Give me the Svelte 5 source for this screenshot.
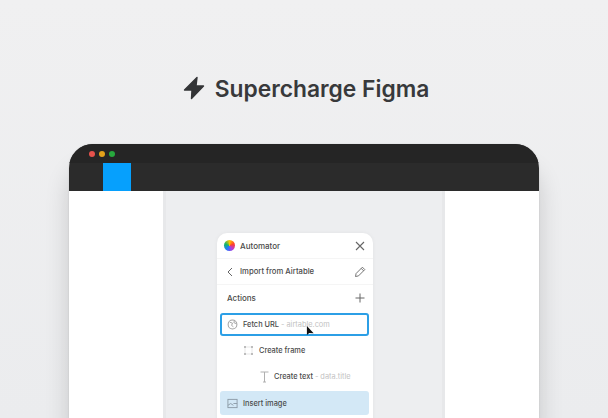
<script>
  const gradient = "conic-gradient(#ffc400, #ff3d2e, #b03be0, #1f7dff, #12b76a, #ffc400)";
</script>

<div class="page">
  <header class="hero">
    <svg class="bolt" viewBox="0 0 22 24" width="22" height="24" aria-hidden="true">
      <path d="M14 1.5 1.5 14H9l-.5 8.5L20.5 10H13z" fill="#333436" stroke="#333436" stroke-width="1.4" stroke-linejoin="round"/>
    </svg>
    <h1>Supercharge Figma</h1>
  </header>

  <section class="window">
    <div class="chrome">
      <div class="lights"><i class="red"></i><i class="yellow"></i><i class="green"></i></div>
      <div class="tabbar"><div class="tab"></div></div>
    </div>
    <div class="workspace">
      <div class="rail"></div>
      <div class="canvas">
        <div class="plugin">
          <div class="row title">
            <span class="logo" style:background={gradient}></span>
            <span class="name">Automator</span>
            <svg class="icon end" viewBox="0 0 10 10" width="10" height="10"><path d="M1 1l8 8M9 1L1 9" stroke="#666" stroke-width="1.1" fill="none"/></svg>
          </div>
          <div class="row sub">
            <svg class="icon" viewBox="0 0 6 10" width="6" height="10"><path d="M5 1 1 5l4 4" stroke="#666" stroke-width="1" fill="none"/></svg>
            <span class="name">Import from Airtable</span>
            <svg class="icon end" viewBox="0 0 12 12" width="12" height="12"><path d="M1.5 10.5l.6-3L8.4 1.2l2.4 2.4L4.5 9.9zM7.2 2.4l2.4 2.4" stroke="#666" stroke-width="0.9" fill="none"/></svg>
          </div>
          <div class="row actions">
            <span class="name">Actions</span>
            <svg class="icon end" viewBox="0 0 10 10" width="10" height="10"><path d="M5 0.5v9M0.5 5h9" stroke="#666" stroke-width="1" fill="none"/></svg>
          </div>
          <div class="list">
            <div class="item selected">
              <svg viewBox="0 0 12 12" width="11" height="11"><circle cx="6" cy="6" r="4.8" fill="none" stroke="#a0a0a0" stroke-width="1.1"/><path d="M3 3.5l3 1-1 2.5 2 1.5M8 2l-.5 2 2.5 1" stroke="#a0a0a0" fill="none"/></svg>
              <span>Fetch URL <em>- airtable.com</em></span>
              <svg class="cursor" viewBox="0 0 10 12" width="9" height="11"><path d="M1 0v10l2.6-2.4L8.5 8z" fill="#111"/></svg>
            </div>
            <div class="item l1">
              <svg viewBox="0 0 9 9" width="9" height="9"><path d="M0 0h2v2H0zM7 0h2v2H7zM0 7h2v2H0zM7 7h2v2H7z" fill="#bdbdbd"/><path d="M2 1h5M2 8h5M1 2v5M8 2v5" stroke="#ddd" stroke-width=".7" fill="none"/></svg>
              <span>Create frame</span>
            </div>
            <div class="item l2">
              <svg viewBox="0 0 9 12" width="9" height="12"><path d="M.5 1h8M4.5 1v10M3 11h3" stroke="#b0b0b0" fill="none"/></svg>
              <span>Create text <em>- data.title</em></span>
            </div>
            <div class="item active">
              <svg viewBox="0 0 12 12" width="11" height="11"><rect x="1" y="1.5" width="10" height="9" fill="none" stroke="#8b9aa6"/><path d="M1 8l3-2 3 2M7 6h4" stroke="#8b9aa6" fill="none"/></svg>
              <span>Insert image</span>
            </div>
          </div>
        </div>
      </div>
      <div class="rail"></div>
    </div>
  </section>
</div>

<style>
  :global(body) { margin: 0; background: #ecedef; }
  .page {
    width: 608px; height: 418px; overflow: hidden;
    background: linear-gradient(#f0f0f1, #ebecee);
    font-family: Inter, "Liberation Sans", sans-serif;
    display: flex; flex-direction: column; align-items: center;
  }
  .hero { flex: none; height: 144px; display: flex; align-items: center; gap: 10px; padding-top: 32px; box-sizing: border-box; margin-left: 4px; }
  .bolt { display: block; flex: none; }
  h1 { margin: 0; font-size: 22.8px; font-weight: 600; color: #38393b; }
  .window {
    width: 470px; height: 274px; flex: none;
    border-radius: 24px 24px 0 0; overflow: hidden;
    display: flex; flex-direction: column;
    box-shadow: 0 24px 24px rgba(0, 0, 0, .16), 0 0 2px rgba(0, 0, 0, .12);
  }
  .chrome { flex: none; height: 47px; background: #2b2b2b; display: flex; flex-direction: column; }
  .lights { flex: none; height: 19px; background: #252525; display: flex; align-items: center; gap: 4px; padding: 0 0 0 20px; box-sizing: border-box; }
  .lights i { width: 6px; height: 6px; border-radius: 50%; }
  .red { background: #e5524c; }
  .yellow { background: #e3a11b; }
  .green { background: #27a83d; }
  .tabbar { flex: 1; padding-left: 34px; }
  .tab { width: 28px; height: 100%; background: #06a0fd; }
  .workspace { flex: 1; min-height: 0; display: flex; background: #fff; }
  .rail { width: 94px; flex: none; background: #fff; }
  .canvas { flex: 1; background: #edeef0; padding: 42px 0 0 51px; border-left: 3px solid #e7e8ea; border-right: 3px solid #e7e8ea; box-sizing: border-box; }
  .plugin { width: 156px; height: 300px; background: #fff; border-radius: 10px 10px 0 0; font-size: 8px; font-weight: 500; color: #4a4a4a; box-shadow: 0 0 4px rgba(0,0,0,.05); }
  .row { height: 26px; display: flex; align-items: center; padding: 0 8px 0 7px; border-bottom: 1px solid #f5f5f5; box-sizing: border-box; }
  .logo { width: 11px; height: 11px; border-radius: 50%; margin-right: 5px; flex: none; }
  .sub { padding-left: 10px; padding-right: 7px; font-size: 7.7px; }
  .sub .name { margin-left: 7px; }
  .name { flex: 1; }
  .icon { display: block; flex: none; }
  .actions { padding-left: 10px; border-bottom: 0; }
  .list { display: flex; flex-direction: column; gap: 3px; padding: 2px 4px 0 3px; font-size: 7.4px; }
  .item { height: 23px; flex: none; border-radius: 3px; display: flex; align-items: center; gap: 5px; padding-left: 7px; position: relative; box-sizing: border-box; }
  .item svg { display: block; flex: none; }
  em { font-style: normal; font-weight: 400; color: #c2c2c2; }
  .selected { border: 2px solid #2c9fe6; padding-left: 5px; }
  .l1 { padding-left: 24px; gap: 6px; }
  .l2 { padding-left: 40px; gap: 5px; }
  .active { background: #d3e8f6; height: 24px; }
  .cursor { position: absolute; left: 84px; top: 11px; }
</style>
